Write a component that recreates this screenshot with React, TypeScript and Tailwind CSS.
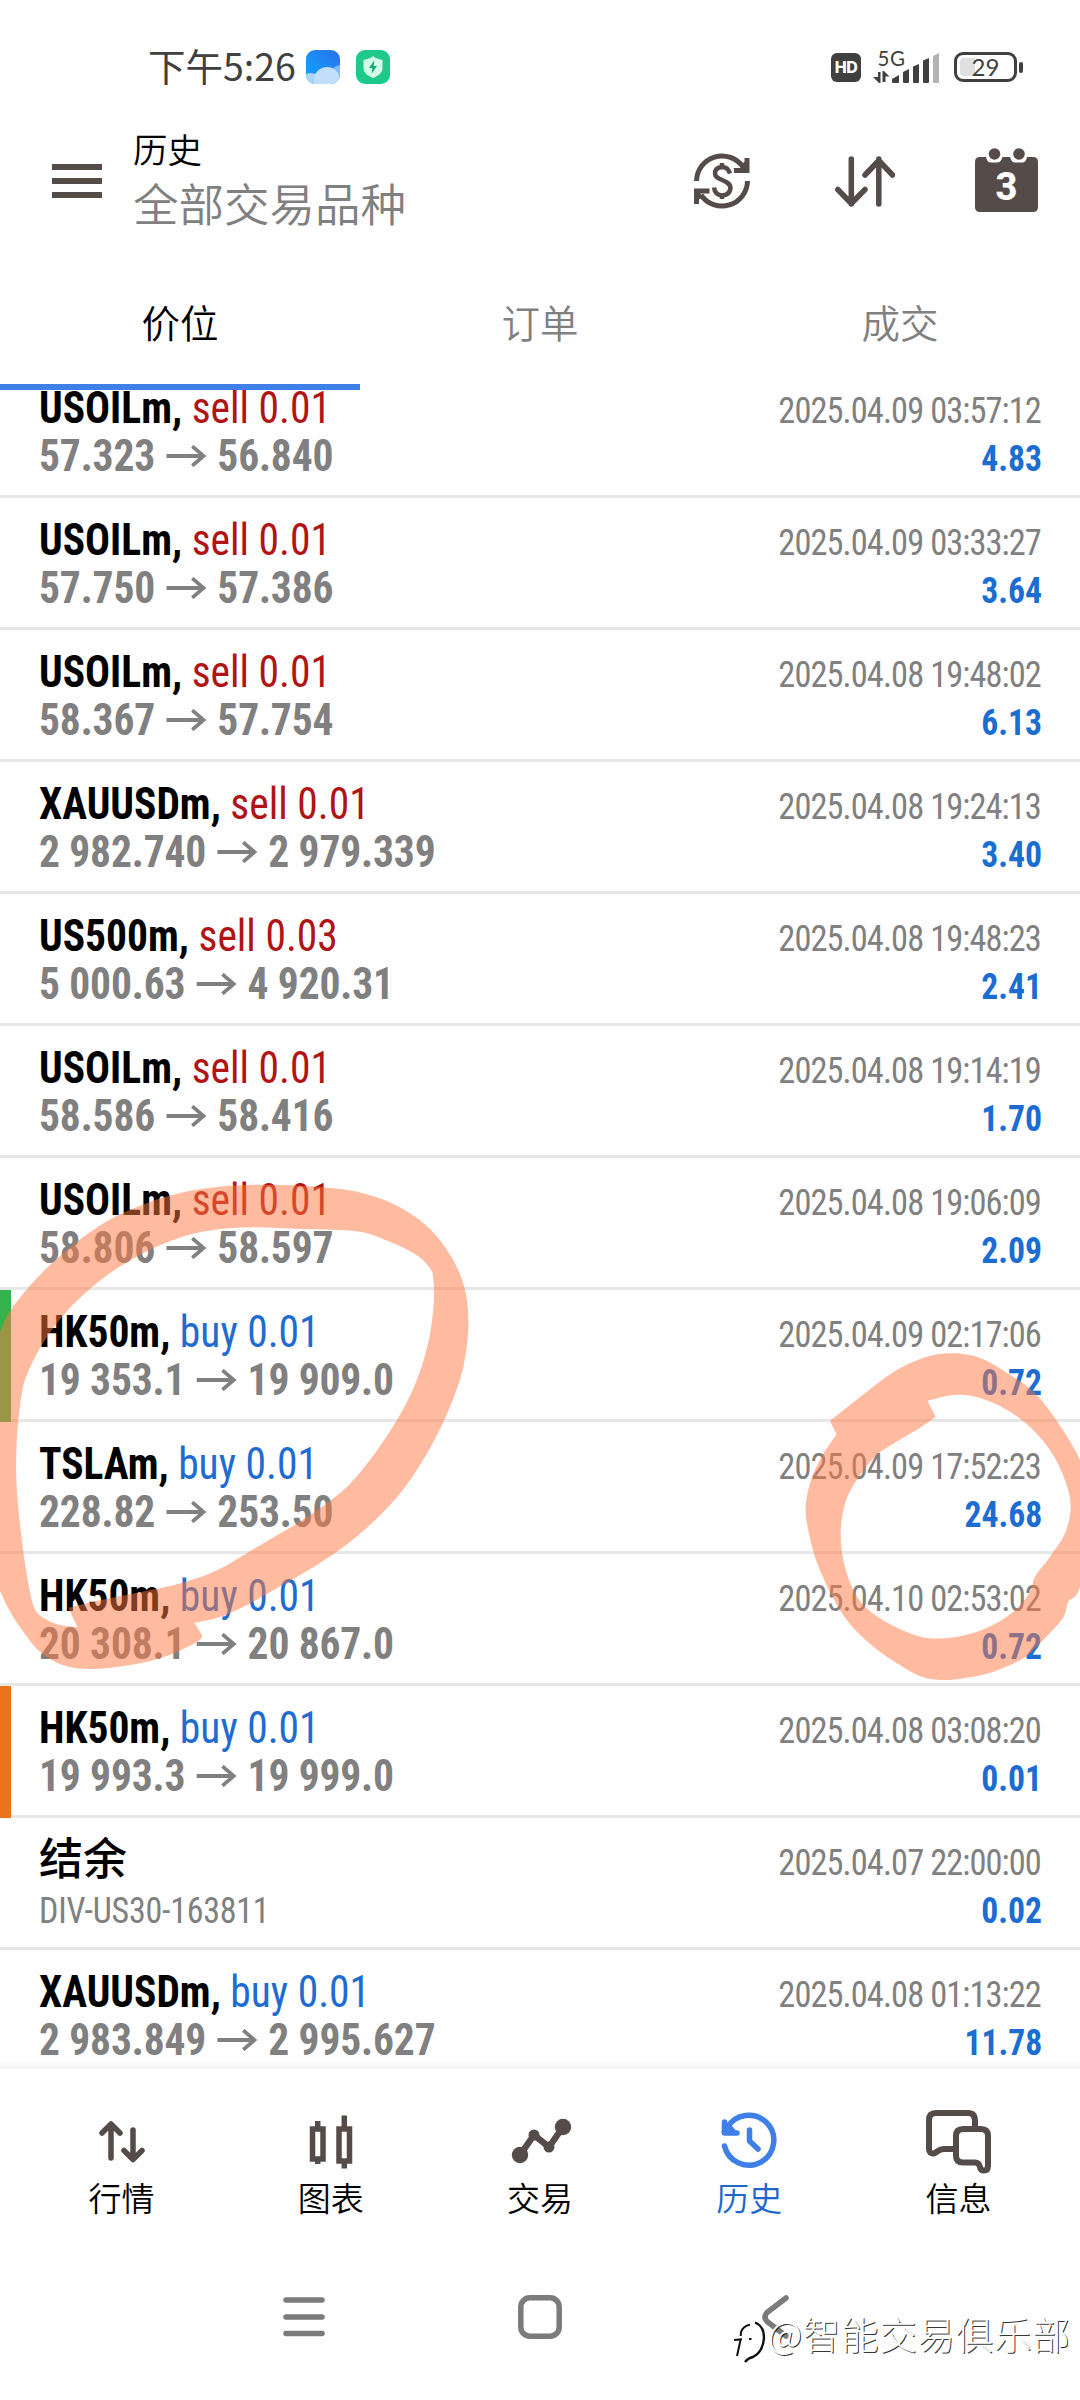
import { ReactNode } from 'react'

type Deal = {
  symbol: string
  side?: 'buy' | 'sell'
  volume?: string
  open?: string
  close?: string
  note?: string
  time: string
  profit: string
  mark?: 'tp' | 'sl'
}

const deals: Deal[] = [
  { symbol: 'USOILm', side: 'sell', volume: '0.01', open: '57.323', close: '56.840', time: '2025.04.09 03:57:12', profit: '4.83' },
  { symbol: 'USOILm', side: 'sell', volume: '0.01', open: '57.750', close: '57.386', time: '2025.04.09 03:33:27', profit: '3.64' },
  { symbol: 'USOILm', side: 'sell', volume: '0.01', open: '58.367', close: '57.754', time: '2025.04.08 19:48:02', profit: '6.13' },
  { symbol: 'XAUUSDm', side: 'sell', volume: '0.01', open: '2 982.740', close: '2 979.339', time: '2025.04.08 19:24:13', profit: '3.40' },
  { symbol: 'US500m', side: 'sell', volume: '0.03', open: '5 000.63', close: '4 920.31', time: '2025.04.08 19:48:23', profit: '2.41' },
  { symbol: 'USOILm', side: 'sell', volume: '0.01', open: '58.586', close: '58.416', time: '2025.04.08 19:14:19', profit: '1.70' },
  { symbol: 'USOILm', side: 'sell', volume: '0.01', open: '58.806', close: '58.597', time: '2025.04.08 19:06:09', profit: '2.09' },
  { symbol: 'HK50m', side: 'buy', volume: '0.01', open: '19 353.1', close: '19 909.0', time: '2025.04.09 02:17:06', profit: '0.72', mark: 'tp' },
  { symbol: 'TSLAm', side: 'buy', volume: '0.01', open: '228.82', close: '253.50', time: '2025.04.09 17:52:23', profit: '24.68' },
  { symbol: 'HK50m', side: 'buy', volume: '0.01', open: '20 308.1', close: '20 867.0', time: '2025.04.10 02:53:02', profit: '0.72' },
  { symbol: 'HK50m', side: 'buy', volume: '0.01', open: '19 993.3', close: '19 999.0', time: '2025.04.08 03:08:20', profit: '0.01', mark: 'sl' },
  { symbol: '结余', note: 'DIV-US30-163811', time: '2025.04.07 22:00:00', profit: '0.02' },
  { symbol: 'XAUUSDm', side: 'buy', volume: '0.01', open: '2 983.849', close: '2 995.627', time: '2025.04.08 01:13:22', profit: '11.78' },
]

type Point = [number, number]

// Catmull-Rom through the points; a repeated point makes a corner
function smooth(points: Point[]) {
  const n = points.length
  const at = (i: number) => points[(i + n) % n]
  let d = `M${points[0][0]} ${points[0][1]}`
  for (let i = 0; i < n; i++) {
    const [p0, p1, p2, p3] = [at(i - 1), at(i), at(i + 1), at(i + 2)]
    if (p1[0] === p2[0] && p1[1] === p2[1]) continue
    d += `C${p1[0] + (p2[0] - p0[0]) / 6} ${p1[1] + (p2[1] - p0[1]) / 6} ${p2[0] - (p3[0] - p1[0]) / 6} ${p2[1] - (p3[1] - p1[1]) / 6} ${p2[0]} ${p2[1]}`
  }
  return d + 'Z'
}

const leftOuter: Point[] = [
  [0, 500], [40, 425], [150, 305], [300, 190], [450, 122], [600, 85], [780, 72], [1000, 82], [1120, 105], [1210, 143],
  [1290, 200], [1350, 275], [1392, 365], [1405, 470], [1390, 600], [1340, 740], [1270, 870], [1190, 980], [1080, 1085],
  [960, 1170], [800, 1260], [720, 1302], [650, 1330], [583, 1344], [583, 1344], [607, 1382], [607, 1382], [590, 1400],
  [500, 1440], [400, 1465], [280, 1478], [190, 1467], [120, 1428], [70, 1370], [30, 1310], [0, 1250], [-60, 1100], [-60, 650],
]
const leftInner: Point[] = [
  [205, 1300], [205, 1300], [300, 1278], [420, 1255], [540, 1230], [650, 1192], [760, 1130], [900, 1050], [1000, 983],
  [1060, 930], [1130, 845], [1200, 740], [1250, 640], [1285, 530], [1301, 420], [1300, 345], [1288, 312], [1240, 270],
  [1130, 222], [1050, 205], [900, 200], [760, 195], [640, 203], [540, 225], [420, 275], [300, 350], [200, 440],
  [130, 530], [80, 625], [62, 700], [50, 820], [50, 950], [65, 1100], [85, 1230], [105, 1305], [140, 1335], [180, 1350],
  [233, 1357], [233, 1357],
]
const rightOuter: Point[] = [
  [270, 363], [270, 363], [400, 260], [480, 205], [560, 170], [640, 160], [720, 174], [800, 218], [880, 275], [945, 355],
  [1020, 480], [1080, 640], [1020, 862], [985, 905], [968, 955], [900, 1030], [850, 1075], [760, 1115], [680, 1133],
  [600, 1140], [540, 1128], [480, 1095], [400, 1040], [330, 972], [280, 895], [230, 785], [205, 690], [197, 620],
  [213, 540], [245, 470], [290, 403], [290, 403],
]
const rightInner: Point[] = [
  [562, 302], [562, 302], [587, 350], [587, 350], [540, 383], [440, 443], [400, 475], [350, 540], [315, 610], [302, 700],
  [312, 790], [340, 870], [380, 925], [450, 973], [545, 1011], [630, 1013], [720, 992], [790, 957], [840, 917],
  [873, 870], [885, 830], [930, 770], [975, 700], [992, 620], [975, 540], [930, 450], [860, 372], [780, 318],
  [705, 290], [640, 285],
]

function StatusBar() {
  return (
    <div className="flex h-[65px] items-end justify-between pl-[148px] pr-[57px]">
      <div className="flex items-center">
        <span className="w-[158px] whitespace-nowrap pb-[4px] text-[37.5px] leading-[30px] text-[#404040]">下午5:26</span>
        <svg className="mr-4 h-[34px] w-[34px]" viewBox="0 0 34 34">
          <defs>
            <linearGradient id="sky" x1="0" y1="1" x2="1" y2="0">
              <stop offset="0" stopColor="#0ea8ff" />
              <stop offset="1" stopColor="#2a70ea" />
            </linearGradient>
            <clipPath id="tile"><rect width="34" height="34" rx="9" /></clipPath>
          </defs>
          <g clipPath="url(#tile)">
            <rect width="34" height="34" fill="url(#sky)" />
            <circle cx="35" cy="27" r="12" fill="#7db9fb" />
            <circle cx="5" cy="33" r="10" fill="#a9d2fc" />
            <circle cx="21" cy="30" r="13" fill="#c3defd" />
          </g>
        </svg>
        <svg className="h-[34px] w-[34px]" viewBox="0 0 34 34">
          <rect width="34" height="34" rx="9" fill="#1fc98c" />
          <path d="M17 6C14 9 10 9 7.500 10V18C7.500 23 12 26 17 28C22 26 26.500 23 26.500 18V10C24 9 20 9 17 6Z" fill="#d5fbe9" />
          <path d="M18.500 10L13 18H16.500L15.500 24L21 16H17.500Z" fill="#14a877" />
        </svg>
      </div>
      <div className="flex h-[34px] items-center">
        <div className="mr-3 flex h-[29px] w-[30px] items-center justify-center rounded-[6px] bg-[#404040] font-['Inter',sans-serif] text-[16px] font-extrabold tracking-[-0.5px] text-white">HD</div>
        <svg className="mr-[13px] h-[34px] w-[68px] overflow-visible" viewBox="0 0 68 34" fill="#404040">
          <text x="4.500" y="15.500" fontSize="20.500" fontFamily="Lato, sans-serif" letterSpacing="0.500">5G</text>
          <path d="M5 22H7.500V33H6L0 27H5ZM9.500 21H11L16.500 26.500H12.500V32H9.500Z" />
          <path d="M19 29L26 25V32Q26 33 25 33H20Q19 33 19 32ZM30 22L36 19V32Q36 33 35 33H31Q30 33 30 32ZM40 16.500L46 14V32Q46 33 45 33H41Q40 33 40 32ZM50 10.500L56 8V32Q56 33 55 33H51Q50 33 50 32Z" />
          <path d="M60 6L66 3V32Q66 33 65 33H61Q60 33 60 32Z" fill="#b3b3b3" />
        </svg>
        <div className="relative flex h-[30px] w-[63px] items-center justify-center rounded-[9px] border-[3px] border-[#404040]">
          <span className="absolute left-[3px] top-[3px] h-[18px] w-[15px] rounded-l-[4px] bg-[#e0e0e0]"></span>
          <span className="relative font-['Lato',sans-serif] text-[24px] leading-none text-[#404040]">29</span>
        </div>
        <span className="ml-[2px] h-[11px] w-[4px] rounded-[2px] bg-[#404040]"></span>
      </div>
    </div>
  )
}

function Header() {
  return (
    <header className="flex h-[185px] items-start pl-[52px]">
      <svg className="mt-[80px] h-[34px] w-[50px]" viewBox="0 0 50 34" fill="#554c49">
        <path d="M0 0H50V6H0ZM0 14H50V20H0ZM0 28H50V34H0Z" />
      </svg>
      <div className="ml-[31px] mt-[43px] flex-1">
        <h1 className="text-[34.5px] font-[350] leading-[42px] text-black">历史</h1>
        <p className="mt-[5px] text-[45.5px] font-[350] leading-[56px] text-[#808080]">全部交易品种</p>
      </div>
      {/* date order */}
      <svg className="mt-[69px] h-[56px] w-[56px]" viewBox="0 0 56 56" fill="none" stroke="#554c49" strokeWidth="5">
        <path d="M2.500 28A25.500 25.500 0 0 1 49 14" />
        <path d="M53.500 28A25.500 25.500 0 0 1 7 42" />
        <path d="M40 17.500H53V5" />
        <path d="M15.500 38H2.500V51" />
        <path d="M50 20L46 12L52 8V20ZM3 36L9 44L4 47V37Z" fill="#554c49" stroke="none" />
        <path d="M36 20.500Q34 14 28 14Q21 14.500 21 20.500C21 28 36 26 36.500 35Q36 42 28 42.500Q21 42 20 34.500M28 10V15M28 42V46" strokeWidth="4.500" />
      </svg>
      <svg className="ml-[85px] mt-[72px] h-[51px] w-[60px]" viewBox="0 0 60 51" fill="none" stroke="#554c49" strokeWidth="5.500" strokeLinecap="round" strokeLinejoin="round">
        <path d="M16.300 3V48M2.800 33.500L16.300 47.500L30 33.500M43.800 48V3M30 19L43.800 4.500L57.500 19" />
      </svg>
      <svg className="ml-[80px] mr-[42px] mt-[64px] h-[64px] w-[63px]" viewBox="0 0 63 64" fill="#554c49">
        <path d="M5 9H11Q12 14.500 16 14.500H22Q26 14.500 27.500 9H35Q36.500 14.500 40 14.500H47Q51 14.500 52 9H58Q63 9 63 14V59Q63 64 58 64H5Q0 64 0 59V14Q0 9 5 9Z" />
        <circle cx="19.500" cy="6" r="5.800" />
        <circle cx="44" cy="6" r="5.800" />
        <text x="31.500" y="52" fontSize="38" fontWeight="800" fontFamily="Roboto, sans-serif" textAnchor="middle" fill="#fff">3</text>
      </svg>
    </header>
  )
}

function Tabs() {
  return (
    <div className="grid h-[121px] grid-cols-3 text-center text-[38.5px] font-[350] leading-[50px] text-[#808080]">
      <div className="border-b-[6px] border-[#3f80e8] pt-[27px] text-black">价位</div>
      <div className="pt-[27px]">订单</div>
      <div className="pt-[27px]">成交</div>
    </div>
  )
}

function Arrow() {
  return (
    <svg className="ml-[12px] mr-[11px] h-[22px] w-[43px]" viewBox="0 0 43 22" fill="none" stroke="#808080" strokeWidth="3.800">
      <path d="M0 11H40M27.500 1.300L39.500 11L27.500 20.700" />
    </svg>
  )
}

function DealRow({ deal }: { deal: Deal }) {
  return (
    <li className="relative flex h-[132px] justify-between whitespace-nowrap border-b-[3px] border-[#e7e7e7] pl-[39px] pr-[38px] font-['Roboto_Condensed','Roboto','Noto_Sans_CJK_SC',sans-serif] [font-stretch:75%]">
      {deal.mark && (
        <span className={`absolute left-0 top-0 h-[132px] w-[11px] ${deal.mark === 'tp' ? 'bg-[#36b24d]' : 'bg-[#eb731b]'}`}></span>
      )}
      <div className="pt-[18px] text-[44px] leading-[48px]">
        {deal.side ? (
          <div className="origin-left scale-x-[0.943] font-bold">
            <div className="text-black">
              {deal.symbol},{' '}
              <span className={`font-normal ${deal.side === 'buy' ? 'text-[#1f6cd0]' : 'text-[#b01414]'}`}>{deal.side} {deal.volume}</span>
            </div>
            <div className="flex items-center tracking-[-0.15px] text-[#808080]">
              {deal.open}
              <Arrow />
              {deal.close}
            </div>
          </div>
        ) : (
          <>
            <div className="-mt-1 font-['Noto_Sans_CJK_SC',sans-serif] font-medium text-black">{deal.symbol}</div>
            <div className="mt-[7px] origin-left scale-x-[0.943] text-[36px] tracking-[-0.25px] text-[#808080]">{deal.note}</div>
          </>
        )}
      </div>
      <div className="flex flex-col items-end pt-[21px] text-[36px] leading-[48px]">
        <div className="mr-[1px] origin-right scale-x-[0.955] tracking-[-0.95px] text-[#808080]">{deal.time}</div>
        <div className="origin-right scale-x-[0.935] font-bold text-[#1b6dd2]">{deal.profit}</div>
      </div>
    </li>
  )
}

function NavItem({ label, active, children }: { label: string; active?: boolean; children: ReactNode }) {
  return (
    <div className={`flex flex-col items-center pt-[39px] ${active ? 'text-[#2068c8]' : 'text-black'}`}>
      <svg className="h-[68px] w-[72px]" viewBox="0 0 72 68" fill="none" stroke={active ? '#3f80e8' : '#554c49'} strokeWidth="6" strokeLinecap="round" strokeLinejoin="round">
        {children}
      </svg>
      <span className="-mt-[2px] text-[33px] font-[350] leading-[46px]">{label}</span>
    </div>
  )
}

function BottomNav() {
  return (
    <nav className="grid h-[170px] grid-cols-5 px-[17px]">
      <NavItem label="行情">
        <path d="M25 50V17M16 25L25 16L34 25M47 22V50M38 42.500L47 51.500L56 42.500" strokeWidth="5.500" />
      </NavItem>
      <NavItem label="图表">
        <g strokeWidth="5.500" strokeLinecap="butt" strokeLinejoin="miter">
          <path d="M17.500 21H28V51H17.500ZM22.700 13V20M22.700 52V56M44 21H54.500V53H44ZM49.300 7.500V20M49.300 53V60.500" />
        </g>
      </NavItem>
      <NavItem label="交易">
        <path d="M16 47L30 27L45 39L59 19" strokeWidth="6.500" />
        <g fill="#554c49" stroke="none">
          <circle cx="16" cy="47" r="8.200" />
          <circle cx="30" cy="27" r="5.500" />
          <circle cx="45" cy="39" r="5.500" />
          <circle cx="59" cy="19" r="8.200" />
        </g>
      </NavItem>
      <NavItem label="历史" active>
        <path d="M11.500 38A25 25 0 1 0 14 20M11.500 14V25H24M36.500 22V33L45 41" strokeWidth="5.500" />
        <path d="M11.500 24L15 18L20 24Z" fill="#3f80e8" />
      </NavItem>
      <NavItem label="信息">
        <path d="M53 20V13Q53 5 46 5H14Q7 5 7 12V41Q7 46 12 45.500C16 44 16 41 22 41H32M41 21H59Q66 21 66 28V58Q66 62.500 62 62.500Q58.500 62.500 58 59Q57 54.500 53 54.500H41Q34 54.500 34 47.500V28Q34 21 41 21Z" />
      </NavItem>
    </nav>
  )
}

function SystemBar() {
  return (
    <div className="flex h-[161px] items-start justify-center pt-[56px]">
      <svg className="h-[44px] w-[42px]" viewBox="0 0 42 44" stroke="#7b7b7b" strokeWidth="5.500" strokeLinecap="round">
        <path d="M3 5H39M3 22H39M3 38.500H39" />
      </svg>
      <svg className="ml-[193px] h-[44px] w-[44px]" viewBox="0 0 44 44" fill="none" stroke="#7b7b7b" strokeWidth="5.500">
        <rect x="2.800" y="2.800" width="38.400" height="38.400" rx="9" />
      </svg>
      <svg className="ml-[200px] mr-[8px] h-[44px] w-[27px]" viewBox="0 0 27 44" fill="none" stroke="#7b7b7b" strokeWidth="5.500" strokeLinecap="round">
        <path d="M24 3L5 17.500Q1 22 5 26.500L24 41" />
      </svg>
    </div>
  )
}

function Watermark() {
  return (
    <div className="absolute left-[732px] top-[2309px] flex items-start whitespace-nowrap text-[37.5px] font-light leading-[48px] tracking-[0.75px] text-white [text-shadow:1px_1px_0.5px_rgba(0,0,0,0.8)]">
      <svg className="mr-[2px] mt-[5px] h-[50px] w-[34px]" viewBox="0 0 34 50" fill="none">
        <path d="M3 42L7 18Q9 11 17 9.500M21.500 8Q30.500 12 30.500 24Q29 38 20 42L12 47" stroke="#fff" strokeWidth="3" />
        <path d="M5 42L8.500 26M8.700 22L9 18Q11 12 18 10.700M2 26L10 25.300M17 25H19.500" stroke="#111" strokeWidth="2" />
        <path d="M23 8.500Q32 12 32 24Q31 38 21 43Q16 44 13 48" stroke="#111" strokeWidth="2.400" />
      </svg>
      @智能交易俱乐部
    </div>
  )
}

export default function App() {
  return (
    <div className="relative h-[2400px] w-[1080px] overflow-hidden bg-[#fefefe] pt-[19px] font-['Noto_Sans_CJK_SC',sans-serif]">
      <StatusBar />
      <Header />
      <Tabs />
      <main className="relative h-[1679px] overflow-hidden">
        <ul className="-mt-6">
          {deals.map((deal, i) => (
            <DealRow key={i} deal={deal} />
          ))}
        </ul>
        <div className="absolute bottom-0 left-0 h-[9px] w-full bg-linear-to-b from-transparent to-black/4"></div>
      </main>
      <BottomNav />
      <SystemBar />

      {/* marker strokes */}
      <svg className="absolute left-0 top-[1160px] h-[540px] w-[500px]" viewBox="0 0 1500 1568" preserveAspectRatio="none">
        <path d={smooth(leftOuter) + smooth(leftInner)} fill="#ff7840" fillOpacity="0.500" fillRule="evenodd" />
      </svg>
      <svg className="absolute left-[740px] top-[1300px] h-[420px] w-[340px]" viewBox="0 0 1020 1260">
        <path d={smooth(rightOuter) + smooth(rightInner)} fill="#ff7840" fillOpacity="0.500" fillRule="evenodd" />
      </svg>
      <Watermark />
    </div>
  )
}
